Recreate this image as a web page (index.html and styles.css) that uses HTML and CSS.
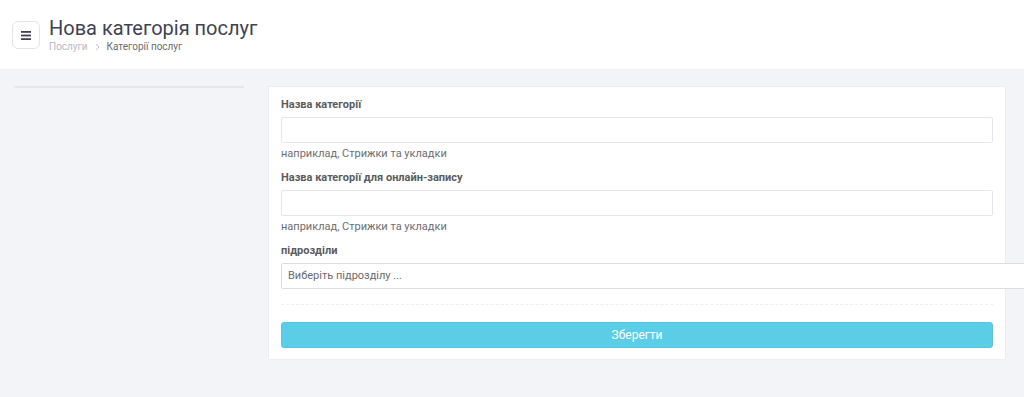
FILE: index.html
```html
<!DOCTYPE html>
<html lang="uk">
<head>
  <meta charset="UTF-8">
  <title>Нова категорія послуг</title>
  <link rel="stylesheet" href="styles.css">
</head>
<body>
  <header class="topbar">
    <button class="menu-btn" type="button">
      <svg width="10" height="9" viewBox="0 0 10 9"><rect y="0" width="10" height="1.8" fill="#3f4254"/><rect y="3.6" width="10" height="1.8" fill="#3f4254"/><rect y="7.2" width="10" height="1.8" fill="#3f4254"/></svg>
    </button>
    <div class="title-block">
      <h1>Нова категорія послуг</h1>
      <div class="crumbs">
        <span class="crumb-link">Послуги</span>
        <svg class="crumb-sep" width="5" height="8" viewBox="0 0 5 8"><path d="M1 1l3 3-3 3" fill="none" stroke="#c4c4cf" stroke-width="1"/></svg>
        <span class="crumb-current">Категорії послуг</span>
      </div>
    </div>
  </header>

  <main class="content">
    <aside class="sidebar"></aside>
    <form class="card">
      <label class="field-label">Назва категорії</label>
      <input class="field" type="text">
      <div class="hint">наприклад, Стрижки та укладки</div>

      <label class="field-label">Назва категорії для онлайн-запису</label>
      <input class="field" type="text">
      <div class="hint">наприклад, Стрижки та укладки</div>

      <label class="field-label">підрозділи</label>
      <div class="select">Виберіть підрозділу ...</div>

      <div class="sep"></div>
      <button class="save-btn" type="button">Зберегти</button>
    </form>
  </main>
</body>
</html>
```

FILE: styles.css
```css
body { margin: 0; background: #f3f4f8; font-family: Roboto, "Noto Sans", sans-serif; }
.topbar { height: 70px; background: #fff; display: flex; align-items: center; padding-left: 12px; gap: 9px; box-sizing: border-box; border-bottom: 1px solid #eef0f4; }
.menu-btn { width: 28px; height: 28px; padding: 0; background: #fff; border: 1px solid #e3e4ea; border-radius: 6px; display: flex; align-items: center; justify-content: center; margin-top: 1px; }
.title-block { display: flex; flex-direction: column; }
.title-block h1 { margin: 0; font-size: 20px; font-weight: 400; line-height: 24px; color: #3f4254; }
.crumbs { display: flex; align-items: center; gap: 7px; font-size: 10px; line-height: 14px; }
.crumb-link { color: #b8b9c6; }
.crumb-current { color: #676a72; }
.content { display: grid; grid-template-columns: 230px 738px; gap: 24px; padding: 16px 0 0 14px; align-items: start; }
.sidebar { border-top: 2px solid #e6e7ec; }
.card { background: #fff; border: 1px solid #eceef2; padding: 10px 12px 11px 12px; display: flex; flex-direction: column; }
.field-label { font-size: 11px; font-weight: 700; color: #5b5b60; line-height: 16px; margin-bottom: 4px; }
.field { height: 26px; box-sizing: border-box; border: 1px solid #e4e6ec; border-radius: 2px; margin: 0; }
.hint { font-size: 11px; color: #6e6e72; line-height: 16px; margin: 3px 0 8px; }
.select { width: 760px; height: 26px; box-sizing: border-box; border: 1px solid #dcdde3; border-radius: 2px; font-size: 11px; color: #6a6a70; line-height: 24px; padding-left: 6px; background: #fff; }
.sep { border-top: 1px dashed #eceef2; margin-top: 15px; }
.save-btn { margin-top: 17px; height: 26px; border: 1px solid #52c7e0; border-radius: 3px; background: #5bcde6; color: #fff; font-family: Roboto, sans-serif; font-size: 12px; }
```
